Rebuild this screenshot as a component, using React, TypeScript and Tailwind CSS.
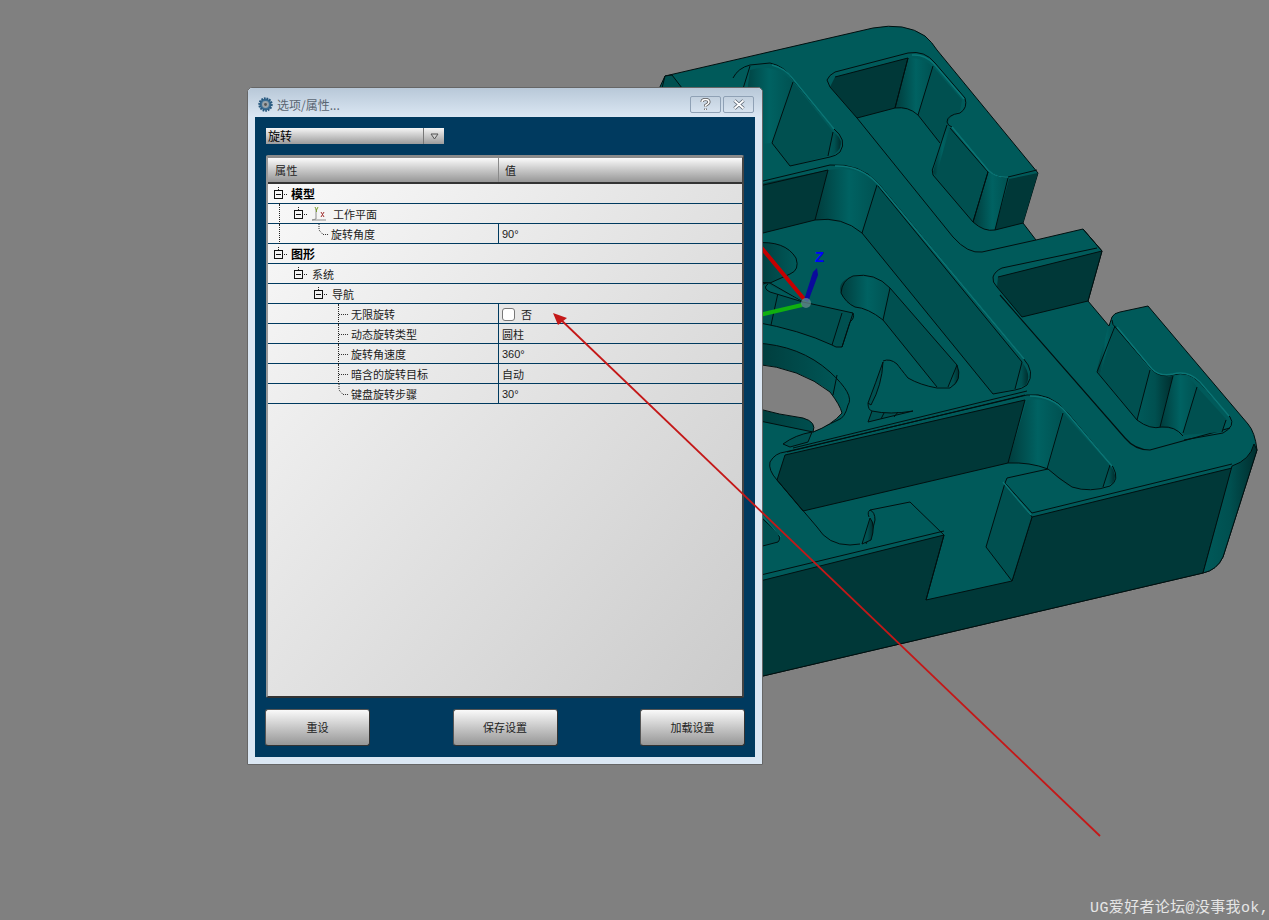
import React from "react";

const CJK = { fontFamily: '"Noto Sans CJK SC", "Liberation Sans", sans-serif' };

function Model() {
  const top = "#005a5a";
  const dark = "#003838";
  const wall = "#005050";
  const line = "#001010";
  return (
    <svg className="absolute left-0 top-0" width="1269" height="920" viewBox="0 0 1269 920">
      <defs>
        <linearGradient id="cyl" x1="0" y1="0" x2="1" y2="0">
          <stop offset="0" stopColor="#003c3c" />
          <stop offset="0.55" stopColor="#006262" />
          <stop offset="1" stopColor="#005252" />
        </linearGradient>
        <linearGradient id="cyl2" x1="0" y1="0" x2="1" y2="0">
          <stop offset="0" stopColor="#005a5a" />
          <stop offset="0.5" stopColor="#005050" />
          <stop offset="1" stopColor="#002e2e" />
        </linearGradient>
        <linearGradient id="bore" x1="0" y1="0" x2="1" y2="0">
          <stop offset="0" stopColor="#003c3c" />
          <stop offset="1" stopColor="#005a5a" />
        </linearGradient>
      </defs>

      {/* silhouette */}
      <path
        d="M640 130 L665 76 L873 28 Q905 22 925 36 Q932 42 937 50 L1038 173 L1023 223 L1036 240 L1083 229 L1102 251 L1088 301 L1109 326 L1112 317 Q1114 313 1120 312 L1148 306 L1248 424 Q1255 432 1257 450 L1223 557 Q1217 570 1203 573 L763 676 L700 690 L640 500 Z"
        fill={top}
        stroke={line}
        strokeWidth="1"
      />

      {/* front wall */}
      <path d="M740 586 L944 535 L926 600 L1012 581 L1032 517 L1232 468 L1203 573 L763 676 L740 682 Z" fill={dark} stroke={line} />
      <path d="M1232 466 Q1250 460 1254 444 L1257 450 L1223 557 Q1217 570 1203 573 Z" fill="url(#cyl2)" stroke={line} />
      {/* notch wall */}
      <path d="M1005 483 L1032 517 L1012 581 L986 547 Z" fill={wall} stroke={line} />
      <path d="M926 600 L944 535" fill="none" stroke={line} />
      <path d="M740 580 L944 531 M1032 513 L1232 464 M1005 483 L1032 513" fill="none" stroke={line} />
      <path d="M1003 482 L1031 515" fill="none" stroke="#0a7676" strokeWidth="1.5" />

      {/* pocket A */}
      <path d="M793 82 L833 132 L828 156 L790 166 L772 143 Z" fill={wall} />
      <path d="M750 70 Q775 62 793 82 L772 143 L740 145 Z" fill="url(#cyl)" />
      <path d="M836 134 Q843 140 840 148 Q836 155 828 157 L833 132 Z" fill="url(#cyl2)" />
      <path d="M733 78 Q738 68 750 65 L770 63 Q785 66 793 80 L833 128 Q848 140 840 152 Q836 156 830 157 L790 166 M750 66 L738 105 M793 82 L772 143 M772 143 L790 166 M833 132 L828 156" fill="none" stroke={line} />
      <path d="M772 65 Q785 68 793 79 L834 129" fill="none" stroke="#0a7676" strokeWidth="1.5" />

      {/* pocket B */}
      <path d="M835 77 L908 58 L895 108 L857 118 L830 87 Z" fill={dark} />
      <path d="M908 58 Q925 58 933 67 L918 115 Q908 108 895 108 Z" fill="url(#cyl)" />
      <path d="M933 67 L962 100 L960 111 Q948 116 947 127 L940 143 L918 115 Z" fill={wall} />
      <path d="M950 127 L988 172 L973 222 L933 175 Z" fill={wall} />
      <path d="M947 127 Q944 135 933 172 L936 176 L950 127 Z" fill="url(#cyl)" />
      <path d="M988 172 Q998 178 1008 178 L995 230 Q982 230 973 222 Z" fill="url(#cyl)" />
      <path d="M1009 179 L1038 173 L1023 223 L995 230 Z" fill={dark} />
      <path
        d="M827 80 Q829 75 835 72 L908 53 Q925 50 935 63 L965 98 Q968 108 960 113 Q947 115 947 122 Q948 126 952 127 L988 170 Q996 178 1008 177 L1037 170
           M835 77 L908 58 L895 108 L857 118 L830 87 M908 58 L895 108 M933 66 L918 115 M895 108 Q908 106 918 115 L940 143 M950 128 L988 172 L973 222 L933 175 Q931 170 934 165 L947 125
           M1008 178 L995 230 M988 172 L973 222 M857 118 L953 237 Q968 254 982 252 L1036 240 M973 222 Q984 232 995 230 L1023 223 M827 80 L830 87"
        fill="none"
        stroke={line}
      />
      <path d="M912 55 Q925 54 934 64 L964 99 M952 127 L988 170 Q996 178 1008 177" fill="none" stroke="#0a7676" strokeWidth="1.5" />

      {/* pocket C */}
      <path d="M755 185 L828 170 L815 220 L755 235 Z" fill={dark} />
      <path d="M828 170 Q860 165 877 185 L862 233 Q840 218 815 220 Z" fill="url(#cyl)" />
      <path d="M877 185 L1022 362 L1015 389 L993 394 L862 233 Z" fill={wall} />
      <path d="M1022 362 Q1032 375 1026 385 L1015 389 Z" fill="url(#cyl2)" />
      <path
        d="M755 183 L830 165 Q860 163 878 183 L1023 358 Q1036 372 1027 385 Q1022 389 1015 390 L993 394
           M755 187 L828 170 M828 170 L815 220 M877 185 L862 233 M755 235 L815 220 Q842 216 862 233 L993 394 M878 186 L1022 362 L1015 389"
        fill="none"
        stroke={line}
      />
      <path d="M835 166 Q860 165 878 184 L1024 359" fill="none" stroke="#0a7676" strokeWidth="1.5" />

      {/* bore at axes */}
      <path d="M755 243 Q785 240 796 258 Q800 270 790 274 L770 283 L755 282 Z" fill="url(#bore)" stroke={line} />
      {/* tab wall near axes */}
      <path d="M770 283 L803 302 L853 313 Q855 318 850 322 L842 347 Q835 348 832 345 Q800 330 755 322 L755 290 Q762 282 770 283 Z" fill={wall} stroke={line} />
      <path d="M853 313 L842 347 M842 313 L832 345 M778 293 L771 325" fill="none" stroke={line} />
      <path d="M768 284 Q762 288 770 292 L803 302" fill={top} stroke={line} />

      {/* slot */}
      <path d="M843 297 Q835 285 848 278 Q870 272 890 288 L883 320 Q868 308 855 307 Q848 304 843 297 Z" fill="url(#cyl)" />
      <path d="M890 288 L957 365 L948 387 L937 387 L883 320 Z" fill={wall} />
      <path d="M957 365 Q962 378 955 385 L948 387 Z" fill="url(#cyl2)" />
      <path
        d="M855 307 Q846 303 841 293 Q842 280 853 276 Q875 272 890 288 L957 365 Q963 380 950 388 L937 388 Q920 385 908 378 Q900 368 897 364 Q890 358 883 361 M890 288 L883 320 L937 387 M957 365 L948 387 M883 320 Q868 308 855 307"
        fill="none"
        stroke={line}
      />

      {/* big bore */}
      <path d="M755 343 Q800 345 830 372 Q855 395 848 405 Q845 418 838 420 L813 432 L755 420 Z" fill="url(#bore)" stroke={line} />
      <path d="M755 364 Q800 368 830 392 Q840 405 842 413 Q832 425 813 432 Q817 422 803 418 Q780 415 755 408 Z" fill="#808080" stroke={line} />
      <path d="M837 375 L833 395" fill="none" stroke={line} />
      <path d="M783 444 Q795 435 812 432 L808 442 L790 447 Z" fill={wall} stroke={line} />

      {/* small walls middle */}
      <path d="M883 362 Q876 382 868 403 L871 405 Q882 385 883 362 Z" fill={wall} stroke={line} />
      <path d="M868 422 L872 411 Q890 415 913 411 Z" fill={wall} stroke={line} />
      <path d="M868 403 Q868 410 872 411 M881 419 L884 413 M894 417 L898 412" fill="none" stroke={line} />

      {/* rim band bottom left */}
      <path d="M793 448 L1027 391 M787 452 L1025 395" fill="none" stroke={line} />

      {/* big lower pocket */}
      <path d="M785 455 L1025 400 L1008 463 L803 511 L777 480 Z" fill={dark} />
      <path d="M1027 400 Q1050 396 1062 412 L1047 469 Q1030 462 1008 463 Z" fill="url(#cyl)" />
      <path d="M1063 413 L1110 465 L1103 487 Q1085 492 1067 485 Q1056 477 1048 469 Z" fill={wall} />
      <path d="M1110 465 Q1118 475 1113 483 L1103 487 Z" fill="url(#cyl2)" />
      <path
        d="M770 462 Q775 453 785 452 L1027 395 Q1050 392 1067 412 L1113 467 Q1120 480 1110 486 Q1090 493 1072 487 Q1058 478 1048 469 L1007 478 L1005 483
           M785 455 L1025 400 M1025 400 L1008 463 L803 511 L777 480 Q768 470 770 462 M785 455 L777 480 M1063 413 L1047 469 M1008 463 Q1030 462 1048 469 M1110 465 L1103 487"
        fill="none"
        stroke={line}
      />
      <path d="M1030 396 Q1052 396 1066 412 L1112 466" fill="none" stroke="#0a7676" strokeWidth="1.5" />

      {/* floor + tab */}
      <path
        d="M777 480 L817 527 Q828 545 850 545 L860 544 M870 510 L910 502 L944 535 M866 544 Q873 530 875 520 Q875 512 870 510 Q867 512 869 517"
        fill="none"
        stroke={line}
      />
      <path d="M870 518 Q876 525 871 540 L862 544 Z" fill="url(#cyl2)" stroke={line} />

      {/* left small piece by the dialog */}
      <path d="M755 512 L776 531 Q782 538 778 542 L755 548 Z" fill={wall} stroke={line} />
      <path d="M760 513 L781 537" fill="none" stroke="#0a7676" />

      {/* dark upper block */}
      <path d="M998 277 L1102 251 L1088 301 L1022 317 L997 287 Z" fill={dark} />
      <path d="M993 277 Q995 271 1002 268 L1097 248 M998 277 L1102 251 L1088 301 L1022 317 L997 287 Q992 282 993 277" fill="none" stroke={line} />
      <path d="M1083 229 L1102 251" fill="none" stroke={line} />
      <path d="M1000 295 L1125 438 Q1135 450 1150 450 L1230 428" fill="none" stroke={line} strokeWidth="1.2" />

      {/* right pocket */}
      <path d="M1115 325 L1150 370 L1137 420 L1100 375 Z" fill={wall} />
      <path d="M1108 327 L1113 327 L1100 375 L1097 370 Z" fill="url(#cyl)" />
      <path d="M1150 370 Q1162 378 1173 376 L1160 427 Q1148 428 1137 420 Z" fill="url(#cyl2)" />
      <path d="M1173 376 Q1188 372 1197 387 L1183 433 Q1172 428 1160 427 Z" fill="url(#cyl)" />
      <path d="M1197 387 L1227 420 L1222 432 L1183 435 Z" fill={wall} />
      <path
        d="M1112 320 Q1112 325 1116 328 L1152 370 Q1160 378 1173 375 Q1188 370 1200 383 L1230 417 Q1236 426 1223 433 L1184 440
           M1115 326 L1097 372 L1137 420 Q1150 430 1162 427 Q1175 426 1183 436 M1150 370 L1137 420 M1173 376 L1160 427 M1197 387 L1183 433 M1226 420 L1222 432"
        fill="none"
        stroke={line}
      />
      <path d="M1117 327 L1152 369 Q1160 377 1173 374 Q1188 370 1200 382 L1229 416" fill="none" stroke="#0a7676" strokeWidth="1.5" />

      {/* facet */}
      <path d="M665 76 L672 75 L682 88 L662 88 Z" fill={wall} stroke={line} />

      {/* axes */}
      <line x1="755" y1="240" x2="804" y2="299" stroke="#c40000" strokeWidth="4" />
      <line x1="755" y1="316" x2="802" y2="305" stroke="#10b010" strokeWidth="4" />
      <path d="M804 300 L813 272 L817 268 L818 275 L808 302 Z" fill="#0a0a9c" />
      <circle cx="806" cy="303" r="5" fill="#6f9090" opacity="0.7" />
      <text x="815" y="262" fill="#0000ff" fontSize="15" fontWeight="700" fontFamily="Liberation Sans">Z</text>
    </svg>
  );
}

function Box() {
  return (
    <svg width="16" height="14" viewBox="0 0 16 14" className="shrink-0">
      <path d="M4.5 0 V3 M10 7.5 H14" stroke="#222" strokeDasharray="1 1" fill="none" />
      <rect x="0.5" y="3.5" width="8" height="8" fill="none" stroke="#111" />
      <path d="M2 7.5 H7" stroke="#111" />
    </svg>
  );
}

function Row({
  indent,
  box,
  label,
  bold,
  value,
  guide,
  stub,
  children,
}: {
  indent: number;
  box?: boolean;
  label: string;
  bold?: boolean;
  value?: React.ReactNode;
  guide?: React.ReactNode;
  stub?: "mid" | "end";
  children?: React.ReactNode;
}) {
  return (
    <div className="relative flex h-5 items-center border-b border-[#003a5f] text-[11px] leading-none text-[#1c1c1c]">
      {guide}
      <div className="flex w-[230px] items-center" style={{ paddingLeft: indent }}>
        {box && <Box />}
        {stub && (
          <svg width="13" height="20" viewBox="0 0 13 20" className="shrink-0">
            {stub === "mid" ? (
              <path d="M1 10.5 H11" stroke="#333" strokeDasharray="1 1" fill="none" />
            ) : (
              <path d="M1 0 V6 L5 10.5 H11" stroke="#333" strokeDasharray="1 1" fill="none" />
            )}
          </svg>
        )}
        {children}
        {bold ? (
          <span className="ml-[1px] text-xs font-bold text-black">{label}</span>
        ) : (
          <span className={box ? "ml-[2px] pt-[2px]" : "pt-[2px]"}>{label}</span>
        )}
      </div>
      {value !== undefined && (
        <div className="flex h-full flex-1 items-center border-l border-[#003a5f] pl-[3px] pt-[2px]">{value}</div>
      )}
    </div>
  );
}

function VGuide({ x, from, to }: { x: number; from: number; to: number }) {
  return (
    <div
      className="absolute w-0 border-l border-dotted border-[#222]"
      style={{ left: x, top: from, height: to - from }}
    />
  );
}

function DlgButton({ label }: { label: string }) {
  return (
    <button className="flex h-[37px] w-[105px] items-center justify-center rounded-[3px] border border-[#555] border-b-[#333] border-r-[#333] bg-gradient-to-b from-[#fafafa] to-[#979797] text-[11px] text-[#222]">
      {label}
    </button>
  );
}

function Dialog() {
  return (
    <div
      className="absolute left-[247px] top-[87px] flex h-[678px] w-[516px] flex-col rounded-t-[5px] border border-[#666] bg-[#dbe7f3] px-[7px] pb-[7px]"
      style={CJK}
    >
      {/* title bar */}
      <div className="-mx-[7px] flex h-[29px] shrink-0 items-center rounded-t-[5px] bg-gradient-to-b from-[#b8c8d8] to-[#dbe7f3] pl-[10px] pr-[8px] pt-1">
        <svg width="15" height="15" viewBox="0 0 15 15" className="mr-[4px]">
          <circle cx="7.5" cy="7.5" r="6" fill="#3d6f94" stroke="#27587e" strokeWidth="2.4" strokeDasharray="1.6 1" />
          <circle cx="7.5" cy="7.5" r="3.4" fill="#9aa4aa" />
          <circle cx="7.5" cy="7.5" r="1.4" fill="#555" />
        </svg>
        <span className="text-xs text-[#5a6672]">选项/属性...</span>
        <div className="ml-auto flex gap-[2px]">
          <div className="flex h-[17px] w-[31px] items-center justify-center rounded-[2px] border border-[#8fa1b5] bg-gradient-to-b from-[#c3d1df] to-[#d7e3ef]">
            <svg width="11" height="13" viewBox="0 0 11 13">
              <path d="M2 4 Q2 1.5 5.5 1.5 Q9 1.5 9 4 Q9 5.5 5.5 7.5 V8.5 M5.5 10.5 V12" fill="none" stroke="#555" strokeWidth="3" />
              <path d="M2 4 Q2 1.5 5.5 1.5 Q9 1.5 9 4 Q9 5.5 5.5 7.5 V8.5 M5.5 10.5 V12" fill="none" stroke="#fff" strokeWidth="1.5" />
            </svg>
          </div>
          <div className="flex h-[17px] w-[31px] items-center justify-center rounded-[2px] border border-[#8fa1b5] bg-gradient-to-b from-[#c3d1df] to-[#d7e3ef]">
            <svg width="14" height="11" viewBox="0 0 14 11">
              <path d="M2.5 1.5 L11.5 9.5 M11.5 1.5 L2.5 9.5" fill="none" stroke="#5a6470" strokeWidth="3.4" />
              <path d="M2.5 1.5 L11.5 9.5 M11.5 1.5 L2.5 9.5" fill="none" stroke="#fff" strokeWidth="1.8" />
            </svg>
          </div>
        </div>
      </div>

      {/* client area */}
      <div className="flex flex-1 flex-col bg-[#003a5f] pl-[10px] pr-[10px] pt-[11px]">
        {/* combo */}
        <div className="ml-[1px] flex h-4 w-[178px] bg-gradient-to-b from-[#f6f6f6] to-[#9c9c9c] text-xs leading-none text-black">
          <div className="flex flex-1 items-center pl-[2px]">旋转</div>
          <div className="flex w-[21px] items-center justify-center border-l border-[#777]">
            <svg width="9" height="7" viewBox="0 0 9 7">
              <path d="M1 1 H8 L4.5 6 Z" fill="#cfcfcf" stroke="#555" />
            </svg>
          </div>
        </div>

        {/* property table */}
        <div className="ml-[1px] mt-[11px] flex h-[543px] w-[478px] flex-col rounded-[2px] border-b-2 border-l-2 border-r-2 border-t-[3px] border-b-[#333] border-l-[#999] border-r-[#444] border-t-[#8a8a8a] bg-gradient-to-br from-[#fafafa] to-[#cbcbcb]">
          <div className="flex h-[26px] shrink-0 border-b-2 border-[#333] bg-gradient-to-b from-[#fbfbfb] to-[#979797] text-[11px] text-[#222]">
            <div className="flex w-[231px] items-center border-r border-[#8a8a8a] pl-[7px] tracking-[0.5px]">属性</div>
            <div className="flex flex-1 items-center pl-[6px]">值</div>
          </div>
          <Row indent={6} box label="模型" bold guide={<VGuide x={11} from={19} to={20} />} />
          <Row indent={26} box label="" guide={<VGuide x={11} from={0} to={20} />}>
            <svg width="18" height="16" viewBox="0 0 18 16" className="mr-[5px] shrink-0">
              <path d="M6 13 V3 M2 14 H16 M6 13 L2 14" stroke="#8c8c8c" fill="none" />
              <path d="M5 1 L6.5 4 L8 1 M6.5 4 V6" stroke="#7aa030" fill="none" />
              <path d="M11 6 L14 11 M14 6 L11 11" stroke="#a03030" fill="none" />
            </svg>
            <span className="pt-[2px]">工作平面</span>
          </Row>
          <Row
            indent={50}
            stub="end"
            label="旋转角度"
            value={<span className="font-['Liberation_Sans'] text-[11px]">90°</span>}
            guide={<VGuide x={11} from={0} to={20} />}
          />
          <Row indent={6} box label="图形" bold />
          <Row indent={26} box label="系统" />
          <Row indent={46} box label="导航" />
          <Row
            indent={70}
            stub="mid"
            label="无限旋转"
            guide={<VGuide x={70} from={0} to={20} />}
            value={
              <div className="flex items-center">
                <span className="h-[13px] w-[13px] rounded-[3px] border border-[#777] bg-white" />
                <span className="ml-[6px]">否</span>
              </div>
            }
          />
          <Row indent={70} stub="mid" label="动态旋转类型" value="圆柱" guide={<VGuide x={70} from={0} to={20} />} />
          <Row
            indent={70}
            stub="mid"
            label="旋转角速度"
            value={<span className="font-['Liberation_Sans'] text-[11px]">360°</span>}
            guide={<VGuide x={70} from={0} to={20} />}
          />
          <Row indent={70} stub="mid" label="暗含的旋转目标" value="自动" guide={<VGuide x={70} from={0} to={20} />} />
          <Row
            indent={70}
            stub="end"
            label="键盘旋转步骤"
            value={<span className="font-['Liberation_Sans'] text-[11px]">30°</span>}
          />
        </div>

        {/* buttons */}
        <div className="mt-[11px] flex justify-between">
          <DlgButton label="重设" />
          <DlgButton label="保存设置" />
          <DlgButton label="加载设置" />
        </div>
      </div>
    </div>
  );
}

export default function App() {
  return (
    <div className="relative h-[920px] w-[1269px] overflow-hidden bg-[#808080]">
      <Model />
      <Dialog />
      {/* annotation arrow */}
      <svg className="absolute left-0 top-0" width="1269" height="920" viewBox="0 0 1269 920">
        <line x1="1100" y1="836" x2="558" y2="317" stroke="#c41818" strokeWidth="1.8" />
        <path d="M553 313 L567 318 L558 325 Z" fill="#c41818" />
      </svg>
      <div
        className="absolute bottom-[1px] right-0 text-[15px] leading-5 tracking-[0.35px] text-[#e6e6e6]"
        style={{ fontFamily: '"Liberation Mono", "Noto Sans CJK SC", monospace' }}
      >
        UG爱好者论坛@没事我ok,
      </div>
    </div>
  );
}
